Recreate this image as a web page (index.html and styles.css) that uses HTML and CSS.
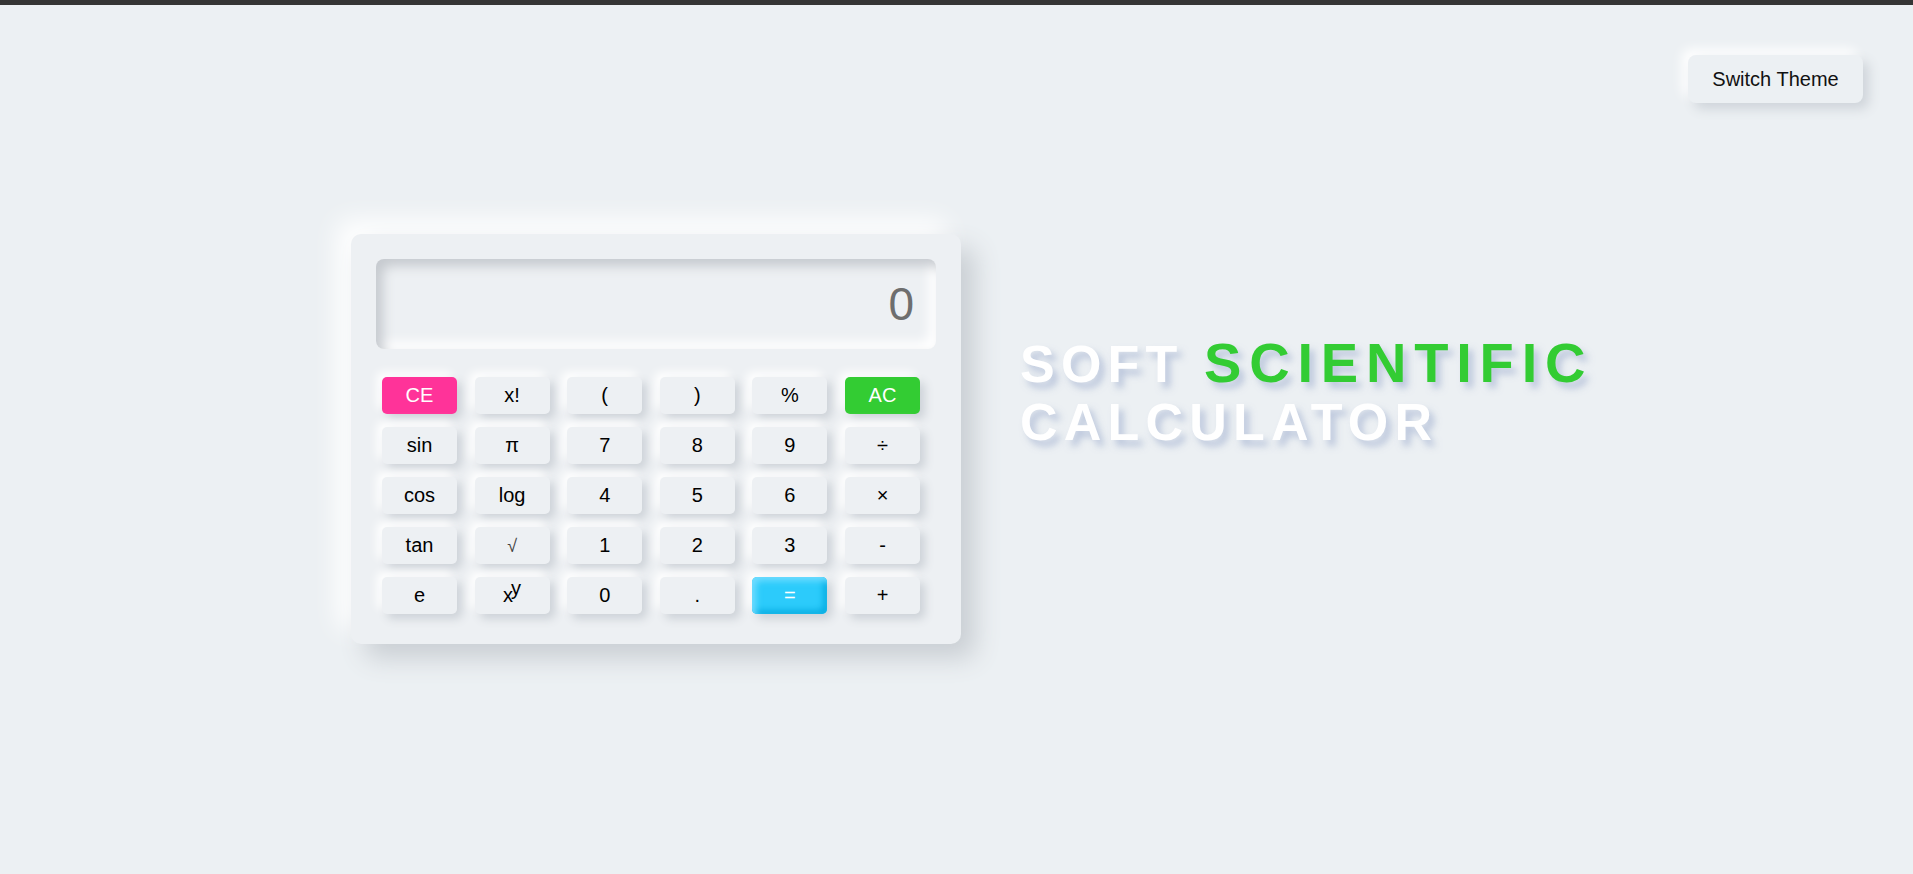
FILE: index.html
```html
<!DOCTYPE html>
<html lang="en">
<head>
<meta charset="utf-8">
<title>Soft Scientific Calculator</title>
<link rel="stylesheet" href="styles.css">
</head>
<body>
<div class="topbar"></div>
<header class="header">
  <button class="theme-btn">Switch Theme</button>
</header>
<main class="main">
  <section class="calc">
    <div class="display"><span class="display-value">0</span></div>
    <div class="keys">
      <button class="key key-ce">CE</button>
      <button class="key">x!</button>
      <button class="key">(</button>
      <button class="key">)</button>
      <button class="key">%</button>
      <button class="key key-ac">AC</button>

      <button class="key">sin</button>
      <button class="key">π</button>
      <button class="key">7</button>
      <button class="key">8</button>
      <button class="key">9</button>
      <button class="key">÷</button>

      <button class="key">cos</button>
      <button class="key">log</button>
      <button class="key">4</button>
      <button class="key">5</button>
      <button class="key">6</button>
      <button class="key">×</button>

      <button class="key">tan</button>
      <button class="key key-sqrt">√</button>
      <button class="key">1</button>
      <button class="key">2</button>
      <button class="key">3</button>
      <button class="key">-</button>

      <button class="key">e</button>
      <button class="key">x<sup class="sup">y</sup></button>
      <button class="key">0</button>
      <button class="key">.</button>
      <button class="key key-eq">=</button>
      <button class="key">+</button>
    </div>
  </section>
  <h1 class="title">SOFT <span class="title-accent">SCIENTIFIC</span><br>CALCULATOR</h1>
</main>
</body>
</html>
```
FILE: styles.css
```css
* { box-sizing: border-box; }

html, body {
  margin: 0;
  padding: 0;
}

body {
  background: #ecf0f3;
  font-family: "Liberation Sans", Arial, sans-serif;
  min-height: 874px;
}

.topbar {
  height: 5px;
  background: #353535;
}

.header {
  display: flex;
  justify-content: flex-end;
  padding: 50px 50px 0 0;
}

.theme-btn {
  height: 48px;
  width: 175px;
  border: none;
  border-radius: 8px;
  background: #ecf0f3;
  color: #111;
  font-family: "Liberation Sans", Arial, sans-serif;
  font-size: 20px;
  box-shadow: 6px 6px 12px #cfd4da, -6px -6px 12px #ffffff;
  cursor: pointer;
}

.main {
  display: flex;
  align-items: flex-start;
  gap: 59px;
  padding: 131px 0 0 351px;
}

.calc {
  width: 610px;
  padding: 25px 25px 30px 25px;
  border-radius: 10px;
  background: #edf0f3;
  box-shadow: 14px 14px 26px #c9ced3, -14px -14px 26px #ffffff;
}

.display {
  height: 90px;
  border-radius: 8px;
  background: #edf0f3;
  box-shadow: inset 7px 7px 12px #c6cacf, inset -7px -7px 12px #ffffff;
  display: flex;
  align-items: center;
  justify-content: flex-end;
  padding-right: 22px;
}

.display-value {
  font-size: 46px;
  color: #6e6e6e;
}

.keys {
  display: grid;
  grid-template-columns: repeat(6, 75px);
  grid-auto-rows: 37px;
  column-gap: 17.6px;
  row-gap: 13px;
  margin: 28px 0 0 6px;
}

.key {
  border: none;
  border-radius: 5px;
  background: #edf0f3;
  color: #000;
  font-family: "Liberation Sans", Arial, sans-serif;
  font-size: 20px;
  padding: 0;
  box-shadow: 5px 5px 10px #cdd2d8, -5px -5px 10px #ffffff;
  cursor: pointer;
  line-height: 37px;
}

.key-ce {
  background: #ff3399;
  color: #fff;
}

.key-ac {
  background: #33cc33;
  color: #fff;
}

.key-eq {
  background: #2ccbfb;
  color: #fff;
  box-shadow: inset 4px 4px 6px #6fdcff, inset -4px -4px 6px #0aaee3, 5px 5px 10px #cdd2d8, -5px -5px 10px #ffffff;
}

.key-sqrt {
  color: #444;
  font-family: "DejaVu Sans", sans-serif;
  font-weight: 200;
  font-size: 18px;
}

.sup {
  font-size: 20px;
  line-height: 0;
  vertical-align: 7px;
  margin-left: -2px;
}

.title {
  margin: 100px 0 0 0;
  font-size: 52px;
  line-height: 58px;
  font-weight: bold;
  letter-spacing: 6.2px;
  color: #ffffff;
  text-shadow: 5px 6px 7px rgba(165, 180, 210, 0.7);
  white-space: nowrap;
}

.title-accent {
  color: #33cc33;
  font-size: 56px;
  letter-spacing: 7.8px;
}
```
